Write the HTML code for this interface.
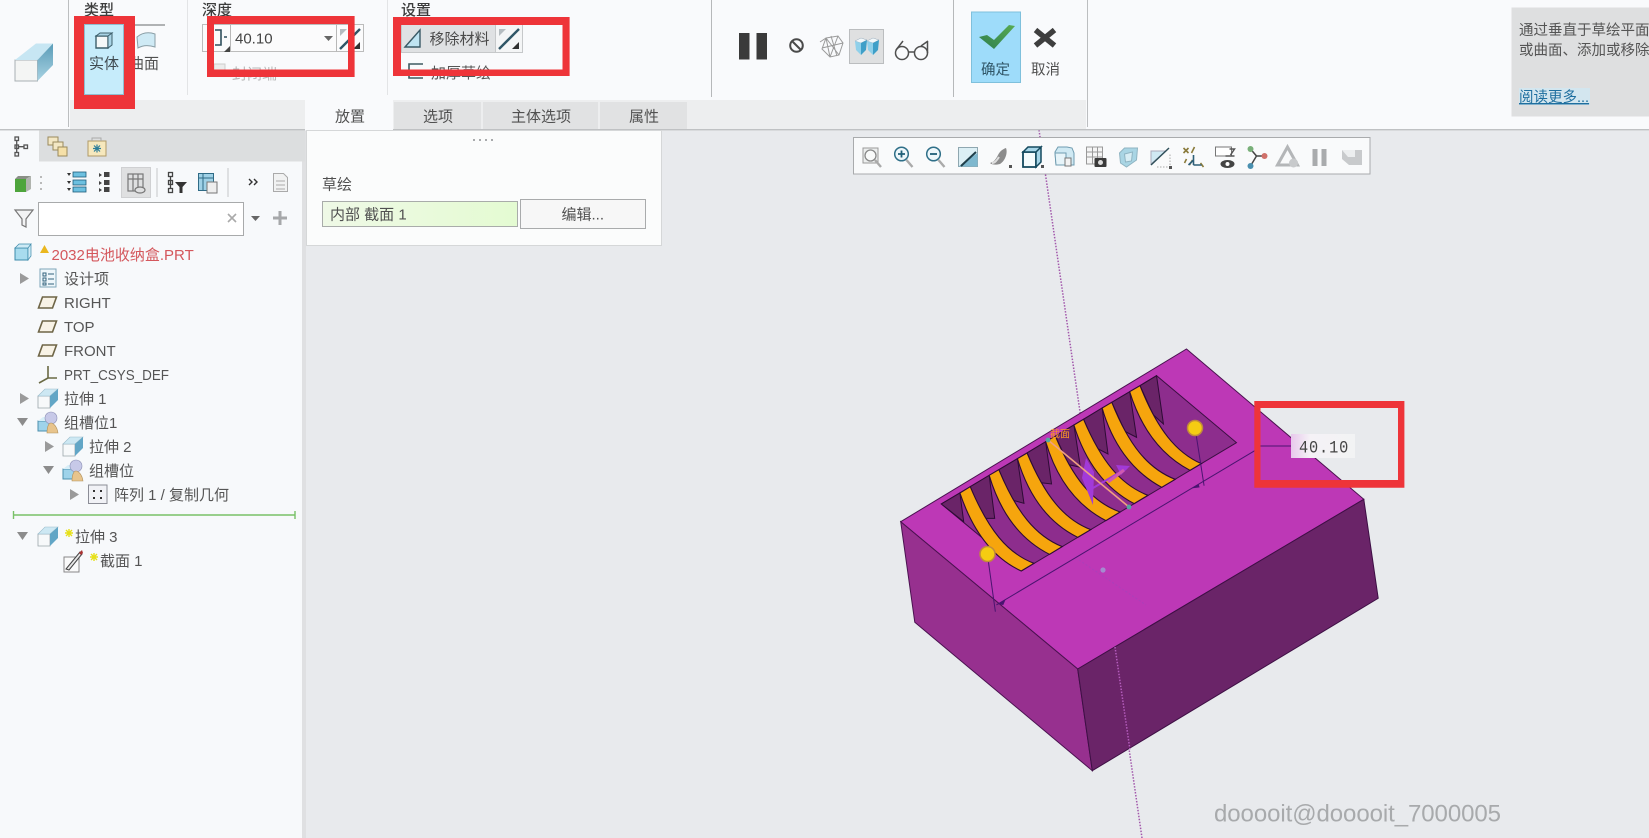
<!DOCTYPE html>
<html lang="zh"><head><meta charset="utf-8"><title>拉伸</title>
<style>
html,body{margin:0;padding:0;background:#e8eaed;width:1649px;height:838px;overflow:hidden}
svg{display:block;position:absolute;left:0;top:0}
text{font-family:"Liberation Sans","Noto Sans CJK SC",sans-serif;font-size:15px;fill:#505050}
.ns{vector-effect:non-scaling-stroke}
.tree text{font-size:15px;fill:#555}
</style></head><body>
<svg width="1649" height="838" viewBox="0 0 1649 838" xmlns="http://www.w3.org/2000/svg">
<defs>
<g id="cube"><path d="M0 8h12v12H0z" fill="#f7f9fa" stroke="#9aa5aa" stroke-width=".8"/><path d="M0 8l7-7h13l-8 7z" fill="#cde8f3" stroke="#9abccb" stroke-width=".6"/><path d="M12 8l8-7v11l-8 8z" fill="#62a6c6"/></g>
<g id="plane"><path d="M4 1h14l-4 11H0z" fill="#f8f3e6" stroke="#6e6546" stroke-width="1.6"/></g>
<g id="asm"><path d="M0 9h12v10H0z" fill="#9fd3ea" stroke="#4d90ad"/><path d="M0 9l5-4h10l-3 4z" fill="#d8eff8"/><circle cx="13" cy="6" r="6" fill="#c7c9e8" stroke="#8c8fb5" stroke-width=".6"/><path d="M9 21c0-7 2-10 4-10s6 3 7 10z" fill="#e8c48c" stroke="#b0915c" stroke-width=".6"/></g>
<path id="rt" d="M0 0l9 5.500L0 11z" fill="#9a9a9a"/>
<path id="dn" d="M0 0h11L5.500 8z" fill="#8c8c8c"/>
<g id="flip"><path d="M1 21L21 1" stroke="#2f5566" stroke-width="2.400"/><path d="M1 1h7l-7 7z" fill="#b5bcc0"/><path d="M21 21h-7l7-7z" fill="#303030"/></g>
<linearGradient id="gf" x1="0" x2="1"><stop offset="0" stop-color="#eff9e6"/><stop offset="1" stop-color="#e4fbd2"/></linearGradient>
<linearGradient id="cb" x1="0" x2="0" y1="0" y2="1"><stop offset="0" stop-color="#5a9cb8"/><stop offset="1" stop-color="#a8d2e2"/></linearGradient>
<linearGradient id="ck" x1="0" x2="1" y1="1" y2="0"><stop offset="0" stop-color="#2f7f50"/><stop offset="1" stop-color="#58ab52"/></linearGradient>
<linearGradient id="lb" x1="0" x2="1"><stop offset="0" stop-color="#e8c8ec"/><stop offset=".3" stop-color="#f5f2f6"/><stop offset="1" stop-color="#f2f3f4"/></linearGradient>
</defs>

<rect width="1649" height="838" fill="#e8eaed"/>

<!-- axis -->
<path d="M1039 130L1142 838" stroke="#a257ab" stroke-width="1.500" stroke-dasharray="1.500 1.500" fill="none"/>

<!-- block -->
<path d="M1186.500 349L1363.800 499.300L1077.700 669L900.700 521.700Z" fill="#bd38b6" stroke="#4a1250"/>
<path d="M900.700 521.700L1077.700 669L1092.300 770.700L914.800 622.300Z" fill="#97308f" stroke="#4a1250"/>
<path d="M1077.700 669L1363.800 499.300L1378.200 598.300L1092.300 770.700Z" fill="#6a2468" stroke="#3e0f45"/>
<path d="M1115 647L1130 750" stroke="#b45cbc" stroke-width="1.500" stroke-dasharray="1.500 1.500" fill="none"/>
<path d="M1079 560L1146 605" stroke="#9a48c0" stroke-dasharray="2 2" opacity=".5" fill="none"/>
<circle cx="1103" cy="570" r="2.600" fill="#a58ad0"/>

<!-- pocket -->
<g transform="translate(880 340) scale(.3444 .3333)">
<path class="ns" d="M803 107L1035 308L412 692L178 492Z" fill="#8d2d8d" stroke="#3a0f42" stroke-width="1"/>
<path class="ns" d="M178 492L232 459L243 545Z" fill="#6a2468" stroke="#2d0b35" stroke-width="1"/>
<g fill="#6a2468" stroke="#2d0b35" stroke-width="1">
<path class="ns" d="M262 440L317 406L333 535L300 535Z"/>
<path class="ns" d="M345 389L399 356L418 490L383 480Z"/>
<path class="ns" d="M427 339L481 305L498 432L465 428Z"/>
<path class="ns" d="M509 288L563 255L582 382L548 374Z"/>
<path class="ns" d="M591 238L645 204L662 342L628 324Z"/>
<path class="ns" d="M673 187L725 155L745 292L711 274Z"/>
<path class="ns" d="M755 137L803 107L823 252L793 224Z"/>
</g>
<g fill="#f6a50d" stroke="#2d0b35" stroke-width="1.100">
<path class="ns" d="M232 459C265 560 320 650 410 693L447 670C370 640 315 570 262 440Z"/>
<path class="ns" d="M317 406C347 510 402 596 492 643L529 620C452 588 397 518 345 389Z"/>
<path class="ns" d="M399 356C429 460 484 546 574 592L612 569C534 538 479 468 427 339Z"/>
<path class="ns" d="M481 305C511 410 566 494 656 542L697 516C616 486 561 416 509 288Z"/>
<path class="ns" d="M563 255C593 355 648 442 738 491L778 466C698 434 643 364 591 238Z"/>
<path class="ns" d="M645 204C673 305 728 392 818 442L857 418C778 386 723 316 673 187Z"/>
<path class="ns" d="M725 155C755 255 810 342 900 391L933 371C860 338 805 268 755 137Z"/>
</g>
<!-- dims -->
<g fill="none" stroke="#4a1470" stroke-width="1">
<path class="ns" d="M915 265L941 437"/><path class="ns" d="M312 645L335 815"/>
<path class="ns" d="M338 795L1088 332"/>
<path class="ns" d="M1100 318H1195"/>
</g>
<path d="M340 792L365 778L358 795Z" fill="#4a1470"/><path d="M925 432L905 445L928 442Z" fill="#4a1470"/>
</g>
<circle cx="1195" cy="428" r="7.500" fill="#f5cc12" stroke="#c08a3c" stroke-width="1.500"/>
<circle cx="987.500" cy="554" r="7.500" fill="#f5cc12" stroke="#c08a3c" stroke-width="1.500"/>
<!-- csys -->
<path d="M1086 458L1094 472L1093 505L1082 478Z" fill="#a23ad8"/>
<path d="M1093 488L1127 468" stroke="#a23ad8" stroke-width="2" fill="none"/>
<path d="M1130 466l-14-1 5 10z" fill="#a23ad8"/>
<path d="M1048 440L1129 507" stroke="#f0a080" stroke-width="1.600"/>
<path d="M1108 482L1124 470" stroke="#d05ab0" stroke-width="3"/>
<circle cx="1048" cy="440" r="2.400" fill="#55a6a0"/><circle cx="1129" cy="507" r="2.400" fill="#55a6a0"/>
<text x="1050" y="437.500" style="font-size:10px;fill:#f5932a">截面</text>

<!-- dim label -->
<rect x="1291" y="434" width="64" height="24" fill="url(#lb)"/>
<text transform="translate(1299 452.500) scale(.85 1)" textLength="58" style='font-family:"Liberation Mono",monospace;font-size:18px;fill:#444'>40.10</text>

<!-- watermark -->
<text x="1214" y="821.700" textLength="287" style="font-size:24px;fill:#a8aaac">dooooit@dooooit_7000005</text>

<!-- ribbon -->
<rect x="0" y="0" width="1649" height="129" fill="#f9fafc"/>
<rect x="0" y="129" width="1649" height="1.400" fill="#bfc1c3"/>
<rect x="70" y="100" width="1016" height="29" fill="#edeeef"/>
<rect x="305" y="100" width="88" height="31" fill="#f9fafc"/>
<rect x="394" y="102" width="87" height="27" fill="#e1e2e3"/>
<rect x="483" y="102" width="115" height="27" fill="#e1e2e3"/>
<rect x="600" y="102" width="87" height="27" fill="#e1e2e3"/>
<text x="335" y="121.500">放置</text><text x="423" y="121.500">选项</text><text x="511" y="121.500">主体选项</text><text x="629" y="121.500">属性</text>
<g stroke-width="1" fill="none">
<path d="M68.500 0V127M1087.500 0V127" stroke="#bcbec0"/>
<path d="M187.500 0V95M387.500 0V95" stroke="#e3e4e6"/>
<path d="M711.500 0V97M953.500 0V97" stroke="#b6b8ba"/>
</g>
<!-- large cube -->
<path d="M15 60h22.500v21H15z" fill="#f4f5f4" stroke="#a9b0b3"/>
<path d="M15 60L36 43.500H53L37.500 60Z" fill="#c7e6f3"/>
<path d="M37.500 60L53 43.500V65L37.500 81Z" fill="url(#cb)"/>

<text x="84" y="15" style="fill:#3c3c3c;font-weight:500">类型</text>
<text x="202" y="15" style="fill:#3c3c3c;font-weight:500">深度</text>
<text x="401" y="15" style="fill:#3c3c3c;font-weight:500">设置</text>

<!-- solid button -->
<rect x="84.500" y="24.500" width="39" height="70" fill="#c6ecfb" stroke="#8fbdd0"/>
<path d="M96 36h12v12H96z" fill="#f5f8f8" stroke="#3d5f6b" stroke-width="1.400"/><path d="M96 36l4-3h12l-4 3zM108 36l4-3v12l-4 3z" fill="#a9d4e6" stroke="#3d5f6b" stroke-width="1"/>
<text x="89" y="68.500" style="fill:#3f4a50">实体</text>
<rect x="135" y="24" width="30" height="2" fill="#b0b2b4"/>
<path d="M137 37c6-5 12-5 18-3v13c-6-2-12-2-17 1z" fill="#cfeaf5" stroke="#8a9ea6"/>
<text x="129" y="68.500">曲面</text>

<!-- depth -->
<rect x="202.500" y="24.500" width="161" height="27" fill="#fbfbfc" stroke="#bcbcbc"/>
<path d="M230.500 24.500V52M336.500 24.500V52" stroke="#b8b8b8"/>
<path d="M215 30h6v15h-6M224 37h3" stroke="#2f4f5c" stroke-width="1.600" fill="none"/>
<path d="M230 46v6h-6z" fill="#444"/>
<text x="235" y="43.500" style="fill:#444">40.10</text>
<path d="M324 36h9l-4.500 5z" fill="#666"/>
<use href="#flip" x="339" y="28"/>
<rect x="214" y="64" width="11" height="11" fill="#ececec" stroke="#cdcdcd"/>
<text x="232" y="79" style="fill:#b8b8b8">封闭端</text>

<!-- settings -->
<rect x="401.500" y="24.500" width="94" height="28" fill="#dfe1e3" stroke="#c6c8ca"/>
<rect x="495.500" y="24.500" width="27" height="28" fill="#f4f5f6" stroke="#c6c8ca"/>
<path d="M405 47L420 30v17z" fill="#bfe4f2" stroke="#3a5a66" stroke-width="1.400"/>
<text x="429.500" y="44" style="fill:#4a4a4a">移除材料</text>
<use href="#flip" x="498" y="28"/>
<path d="M423 64h-14v14h14" stroke="#3f5a62" stroke-width="1.600" fill="none"/>
<text x="431" y="78" style="fill:#555">加厚草绘</text>

<!-- controls -->
<rect x="739" y="33" width="10.500" height="26.500" fill="#3a3a3a"/><rect x="756.500" y="33" width="10.500" height="26.500" fill="#3a3a3a"/>
<circle cx="796.500" cy="45.500" r="6.300" fill="none" stroke="#4a4a4a" stroke-width="2"/><path d="M792.500 41.500l8 8" stroke="#4a4a4a" stroke-width="2"/>
<g fill="none" stroke="#9a9a9a" stroke-width="1"><path d="M826 38l12-2 5 7-4 12-9 2-8-8zM826 38l4 19M838 36l-8 21M822 48l21-5M826 38l13 17M820 42l6-4M831 36l6 20"/></g>
<rect x="849.500" y="29.500" width="34" height="34" fill="#dfe0e1" stroke="#bbbdbf"/>
<path d="M855 41l6-3 6 2-6 3z" fill="#f2f8fa" stroke="#9ab" stroke-width=".5"/><path d="M855 41l6 2v12l-5-5z" fill="#8fd0ea"/><path d="M861 43l6-3-1 10-5 5z" fill="#3f9fc8"/>
<path d="M867 41l6-3 6 2-6 3z" fill="#f2f8fa" stroke="#9ab" stroke-width=".5"/><path d="M867 41l6 2v12l-5-5z" fill="#8fd0ea"/><path d="M873 43l6-3-1 10-5 5z" fill="#3f9fc8"/>
<g fill="none" stroke="#4f4f4f" stroke-width="1.500"><circle cx="902" cy="53" r="6.500"/><circle cx="921" cy="53" r="6.500"/><path d="M908.500 52h6M896 50l7-9M921 46l7-5M927.500 53V41"/></g>

<!-- ok / cancel -->
<rect x="971.500" y="12" width="49" height="70.500" fill="#9edcfa" stroke="#7fc0dc"/>
<path d="M979 37l8-2 7 5 15-15 6 1-21 23z" fill="url(#ck)"/>
<text x="981" y="74.500" style="fill:#2f5566;font-size:14.500px">确定</text>
<path d="M1035.500 30L1054.500 45.500M1054.500 30L1035.500 45.500" stroke="#3e3e3e" stroke-width="5.500" fill="none"/>
<text x="1031" y="74.500" style="font-size:14.500px">取消</text>

<!-- help panel -->
<rect x="1511.500" y="7.500" width="138" height="109" fill="#dedfe0"/>
<text x="1519" y="35" style="font-size:14.500px;fill:#555">通过垂直于草绘平面</text>
<text x="1519" y="55" style="font-size:14.500px;fill:#555">或曲面、添加或移除</text>
<rect x="1519" y="88" width="71" height="17" fill="#d3e6ef"/>
<text x="1519" y="102" style="font-size:14.500px;fill:#1f6f9f;text-decoration:underline">阅读更多...</text>

<!-- left panel -->
<rect x="0" y="130.500" width="302" height="708" fill="#f7f9fb"/>
<rect x="302" y="130.500" width="4" height="708" fill="#dfe0e2"/>
<rect x="39" y="130.500" width="266" height="31" fill="#dcdedf"/>
<g fill="none" stroke="#555" stroke-width="1.300"><rect x="15" y="137" width="3.500" height="3.500"/><rect x="15" y="145" width="3.500" height="3.500"/><rect x="15" y="152.500" width="3.500" height="3.500"/><rect x="24" y="145" width="3.500" height="3.500"/><path d="M16.700 140.500v12M18.500 146.700h5.500"/></g>
<g stroke="#9a8a5c" fill="#f3e7c4"><rect x="48" y="137" width="10" height="8"/><rect x="53" y="142" width="10" height="8"/><rect x="58" y="147" width="9" height="9" fill="#f5e0a8"/></g>
<rect x="88" y="141" width="18" height="15" fill="#f6e8bd" stroke="#b09a68"/><path d="M92 141v-3h9v3" stroke="#aaa" fill="none"/><path d="M93 148.500h8M97 144.500v8M94 145.500l6 6M100 145.500l-6 6" stroke="#2f7f9a" stroke-width="1.200"/>

<!-- row tools -->
<path d="M15 179h11v13H15z" fill="#4ea53c"/><path d="M15 179l3-3h13l-5 3z" fill="#8a8f86"/><path d="M26 179l5-3v13l-5 3z" fill="#b0b4ae"/>
<path d="M41 176v2M41 182v2M41 188v2" stroke="#aaa" stroke-width="1.600"/>
<g><rect x="73" y="172" width="13" height="5" stroke="#1f5c7a" stroke-width=".8" fill="#6cc0e0"/><rect x="73" y="180" width="13" height="5" stroke="#1f5c7a" stroke-width=".8" fill="#6cc0e0"/><rect x="73" y="187" width="13" height="5" stroke="#1f5c7a" stroke-width=".8" fill="#6cc0e0"/><path d="M67 173h4l-2 3zM67 181h4l-2 3zM67 188h4l-2 3z" fill="#333"/></g>
<g fill="#444"><rect x="104" y="172" width="5.500" height="5"/><rect x="104" y="180" width="5.500" height="5"/><rect x="104" y="187" width="5.500" height="5"/><path d="M99 173l3 2-3 2zM99 181l3 2-3 2zM99 188l3 2-3 2z"/></g>
<rect x="121.500" y="167.500" width="29" height="30" fill="#dfe0e1" stroke="#cfd0d2"/>
<g fill="none" stroke="#777" stroke-width="1.200"><rect x="128" y="174" width="15" height="17"/><path d="M133 174v17M138 174v17M128 179h15"/><ellipse cx="140" cy="190" rx="5" ry="3" fill="#dfe0e1"/></g>
<path d="M157 168v29M228 168v29" stroke="#c4c6c8"/>
<g fill="none" stroke="#444" stroke-width="1.300"><rect x="168.500" y="172.500" width="4" height="4"/><rect x="168.500" y="180.500" width="4" height="4"/><rect x="168.500" y="188.500" width="4" height="4"/><path d="M170.500 176.500v12"/></g>
<path d="M175 182h12l-4.500 5v6h-3v-6z" fill="#333"/>
<rect x="198.500" y="173.500" width="15" height="17" fill="#9fd1e6" stroke="#2f6b86"/><path d="M203 173.500v17M198.500 178h15" stroke="#2f6b86"/><rect x="207" y="182" width="10" height="11" fill="#eee" stroke="#777"/>
<path d="M249 179l3 3-3 3M254 179l3 3-3 3" stroke="#333" stroke-width="1.400" fill="none"/>
<path d="M273.500 173.500h10l4 4v14h-14z" fill="#f1f2f2" stroke="#aaa"/><path d="M276 181h9M276 185h9M276 189h9" stroke="#aaa"/>

<!-- search -->
<rect x="38.500" y="202.500" width="205" height="33" fill="#fff" stroke="#a8aaab"/>
<path d="M15 210h18l-7 9v8l-4-2v-6z" fill="#f2f3f4" stroke="#777" stroke-width="1.200"/>
<path d="M228 214l8 8M236 214l-8 8" stroke="#aaa" stroke-width="1.600"/>
<path d="M251 216h9l-4.500 5z" fill="#666"/>
<path d="M273 218h14M280 211v14" stroke="#a6a8aa" stroke-width="3"/>

<!-- tree -->
<g class="tree">
<path d="M15 248h13v12H15z" fill="#a8dcee" stroke="#3d8bab"/><path d="M15 248l4-4h12l-3 4zM28 248l3-4v12l-3 4z" fill="#cdeaf5" stroke="#3d8bab" stroke-width=".7"/>
<path d="M40 253l4.500-8 4.500 8z" fill="#eab71f"/>
<text x="51.500" y="260" style="fill:#d4575c">2032电池收纳盒.PRT</text>

<use href="#rt" x="20" y="273"/>
<rect x="40" y="269" width="16" height="18" fill="#eef6fa" stroke="#7ea5b8"/><path d="M43 273h3v3h-3zM43 278h3v3h-3zM43 283h3v2h-3zM48 274h6M48 279h6M48 284h6" stroke="#33637c" fill="none"/>
<text x="64" y="284">设计项</text>

<use href="#plane" x="38.500" y="296"/><text x="64" y="308">RIGHT</text>
<use href="#plane" x="38.500" y="320"/><text x="64" y="332">TOP</text>
<use href="#plane" x="38.500" y="344"/><text x="64" y="356">FRONT</text>

<path d="M48 366V378L39 383M48 378H57" stroke="#6a6a44" stroke-width="1.600" fill="none"/>
<text x="64" y="380" textLength="105" lengthAdjust="spacingAndGlyphs">PRT_CSYS_DEF</text>

<use href="#rt" x="20" y="393"/><use href="#cube" x="38" y="388"/><text x="64" y="404">拉伸 1</text>
<use href="#dn" x="17" y="418"/><use href="#asm" x="38" y="412"/><text x="64" y="428">组槽位1</text>
<use href="#rt" x="45" y="441"/><use href="#cube" x="63" y="436"/><text x="89" y="452">拉伸 2</text>
<use href="#dn" x="43" y="466"/><use href="#asm" x="63" y="460"/><text x="89" y="476">组槽位</text>
<use href="#rt" x="70" y="489"/>
<rect x="88.500" y="485" width="18.500" height="18.500" fill="#f1f2f6" stroke="#8b8d96"/><path d="M93 490h2v2h-2zM100 490h2v2h-2zM93 497h2v2h-2zM100 497h2v2h-2z" fill="#333"/>
<text x="114" y="500">阵列 1 / 复制几何</text>

<path d="M13.500 515H295" stroke="#79c168" stroke-width="1.600"/><path d="M13.500 511v8M295 511v8" stroke="#79c168" stroke-width="1.400"/>

<use href="#dn" x="17" y="532"/><use href="#cube" x="38" y="526"/>
<path d="M65 533h8M69 529v8M66 530l6 6M72 530l-6 6" stroke="#e6e018" stroke-width="1.400"/>
<text x="75" y="542">拉伸 3</text>
<path d="M64 557h15v15H64z" fill="#fafafa" stroke="#888"/><path d="M66 569l14-17 2 2-13 16z" fill="#e8e8e8" stroke="#444"/><path d="M79 553l3-3 1 3-2 2z" fill="#a33"/>
<path d="M90 557h8M94 553v8M91 554l6 6M97 554l-6 6" stroke="#e6e018" stroke-width="1.400"/>
<text x="100" y="566">截面 1</text>
</g>

<!-- placement panel -->
<rect x="306.500" y="130.500" width="355" height="115" fill="#fbfcfc" stroke="#d5d7d8"/>
<path d="M473 139h2v2h-2zM479 139h2v2h-2zM485 139h2v2h-2zM491 139h2v2h-2z" fill="#a8aaac"/>
<text x="322" y="189.500">草绘</text>
<rect x="322.500" y="201.500" width="195" height="25" fill="url(#gf)" stroke="#a9acaa"/>
<text x="330" y="219.500">内部 截面 1</text>
<rect x="520.500" y="199.500" width="125" height="29" fill="#f7f7f7" stroke="#a9abac"/>
<text x="561.500" y="219.500">编辑...</text>

<!-- graphics toolbar -->
<rect x="853.500" y="137.500" width="516.500" height="36.500" fill="#f9fafb" stroke="#a9abad"/>
<g transform="translate(0 157)">
<g transform="translate(872 0)"><rect x="-9" y="-9" width="15" height="15" fill="#eceeee" stroke="#9a9a9a"/><circle cx="-1.500" cy="-1.500" r="5.500" fill="#f9fafa" stroke="#8a8a8a" stroke-width="1.300"/><path d="M3 3l6 7" stroke="#aaa" stroke-width="2.400"/></g>
<g transform="translate(903.500 0)"><circle cx="-2" cy="-3" r="6.800" fill="#eef7fb" stroke="#2f6f88" stroke-width="1.500"/><path d="M-5.500-3h7M-2-6.500v7" stroke="#1f5f78" stroke-width="1.800"/><path d="M3 3l6 7" stroke="#aaa" stroke-width="2.400"/></g>
<g transform="translate(935.500 0)"><circle cx="-2" cy="-3" r="6.800" fill="#eef7fb" stroke="#2f6f88" stroke-width="1.500"/><path d="M-5.500-3h7" stroke="#1f5f78" stroke-width="1.800"/><path d="M3 3l6 7" stroke="#aaa" stroke-width="2.400"/></g>
<g transform="translate(968 0)"><path d="M-9.500-9.500h19v19h-19z" fill="#dceff5" stroke="#8fa7b0"/><path d="M-9.500 9.500L9.500-4v13.500z" fill="#7fb8cf"/><path d="M-7 9L8-5" stroke="#1e3e4a" stroke-width="2"/></g>
<g transform="translate(1000 0)"><path d="M-10 6c4-1 6-4 8-8s5-6 8-7c2 5-1 13-6 16-4 1-8 1-10-1z" fill="#8c8c8c"/><path d="M-8 6c3 0 5-3 7-6" stroke="#ddd" stroke-width="2" fill="none"/><path d="M9 8h3v3H9z" fill="#555"/></g>
<g transform="translate(1032 0)"><path d="M-9-5h13v15H-9z" fill="#f5fbfd" stroke="#14495e" stroke-width="1.800"/><path d="M-9-5l5-5H9L4-5zM4-5l5-5V5l-5 5z" fill="#a7d5e8" stroke="#14495e" stroke-width="1.500"/><path d="M9 8h3v3H9z" fill="#555"/></g>
<g transform="translate(1064 0)"><path d="M-9-5l3-5h9l5 1 2 5v12H-8z" fill="#cfe9f3" stroke="#6f9cb0"/><path d="M-9-4h11v12H-8z" fill="#e7f4f9" stroke="#6f9cb0"/><rect x="1" y="1" width="6" height="8" fill="#f3f3f3" stroke="#777"/></g>
<g transform="translate(1096.500 0)"><g stroke="#999" fill="#f5f5f5"><rect x="-10" y="-10" width="16" height="17"/><path d="M-10-5H6M-10 0H6M-4-10V7M1-10V7" fill="none"/></g><rect x="-2" y="1" width="12" height="9" rx="1" fill="#3a3a3a"/><circle cx="4" cy="5.500" r="2.500" fill="#ddd"/></g>
<g transform="translate(1128.500 0)"><path d="M-9-4l5-5H9L8 3-2 10-8 6z" fill="#a9d5e4" stroke="#8fb4c2"/><path d="M-4-3L4-5 3 4-3 5z" fill="#d7edf4" stroke="#8fb4c2"/></g>
<g transform="translate(1160 0)"><path d="M-9 7V-6H6z" fill="#d0e9f3" stroke="#aab"/><path d="M-9 8L9-9" stroke="#2f4f5a" stroke-width="1.500"/><path d="M-3 10H10V-3" stroke="#aaa" stroke-dasharray="1.500 1.500" fill="none"/><path d="M9 9h3v3H9z" fill="#555"/></g>
<g transform="translate(1192.500 0)" stroke-width="1.600" fill="none"><path d="M-9-9l5 5M-4-9l-5 5" stroke="#8a7a3a"/><path d="M2-10l-3 6M-6 2l-2 4M-3 8l3-5M8 6l3 4" stroke="#8a7a3a"/><path d="M1 8V-2M1 8H9M1 3l-5 5" stroke="#2f5f78"/></g>
<g transform="translate(1225.500 0)"><rect x="-10" y="-10" width="16" height="9" fill="#fff" stroke="#777"/><path d="M0-1h9M4-8l5 0-4 6" stroke="#555" stroke-width="1.500" fill="none"/><ellipse cx="2" cy="7" rx="7" ry="4" fill="#444"/><circle cx="2" cy="7" r="2" fill="#fff"/></g>
<g transform="translate(1256.500 0)"><path d="M-6-8L0-1-6 9M0-1h8" stroke="#444" stroke-width="1.500" fill="none"/><circle cx="-6" cy="-8" r="3" fill="#79b079"/><circle cx="8" cy="-1" r="3" fill="#d0706a"/><circle cx="-6" cy="9" r="3" fill="#4a90b0"/></g>
<g transform="translate(1287.500 0)"><path d="M0-10L10 8H-10z" fill="none" stroke="#b4b6b8" stroke-width="3"/><circle cx="6" cy="6" r="4.500" fill="#c8cacc"/></g>
<g transform="translate(1319.500 0)"><rect x="-7" y="-8" width="5" height="17" fill="#a9abad"/><rect x="2" y="-8" width="5" height="17" fill="#a9abad"/></g>
<g transform="translate(1352 0)"><path d="M-10-7H10V8H-3L-10 2z" fill="#c8cacc"/><path d="M-10-7H3V0H-4z" fill="#eceeef"/></g>
</g>

<!-- red frames -->
<g fill="#ee3439" fill-rule="evenodd">
<path d="M74 16H135V109H74ZM84 24V95H124V24Z"/>
<path d="M207 16H354.600V77H207ZM214 24V69.500H348V24Z"/>
<path d="M393 17H569.600V76H393ZM401 25V69.500H562.500V25Z"/>
<path d="M1254.300 401H1404.400V487.700H1254.300ZM1260.500 408V480H1398V408Z"/>
</g>
</svg>
</body></html>
